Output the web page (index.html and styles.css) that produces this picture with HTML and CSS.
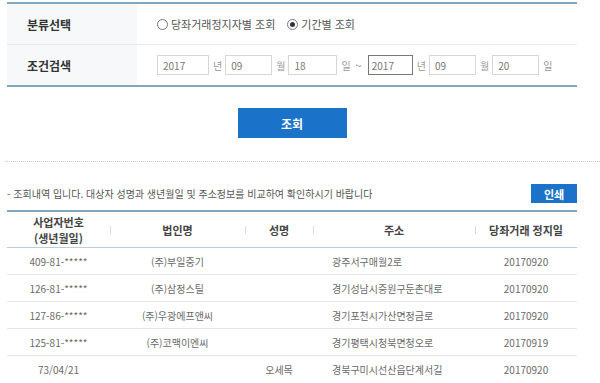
FILE: index.html
```html
<!DOCTYPE html>
<html lang="ko">

<head>
    <meta charset="UTF-8">
    <meta name="viewport" content="width=device-width, initial-scale=1.0">
    <title>당좌거래정지자 조회</title>
    <link rel="stylesheet" href="styles.css">
</head>

<body>
    <div class="page">
        <!-- Search form -->
        <div class="search">
            <div class="search-row">
                <div class="search-label">분류선택</div>
                <div class="search-field">
                    <label class="radio"><span class="radio-dot"></span>당좌거래정지자별 조회</label>
                    <label class="radio"><span class="radio-dot checked"></span>기간별 조회</label>
                </div>
            </div>
            <div class="search-row">
                <div class="search-label">조건검색</div>
                <div class="search-field">
                    <input type="text" class="date-input wide" value="2017">
                    <span class="unit">년</span>
                    <input type="text" class="date-input" value="09">
                    <span class="unit">월</span>
                    <input type="text" class="date-input mid" value="18">
                    <span class="unit">일</span>
                    <span class="tilde">~</span>
                    <input type="text" class="date-input focus" value="2017">
                    <span class="unit">년</span>
                    <input type="text" class="date-input" value="09">
                    <span class="unit">월</span>
                    <input type="text" class="date-input" value="20">
                    <span class="unit">일</span>
                </div>
            </div>
        </div>

        <div class="actions">
            <button class="btn-search">조회</button>
        </div>

        <div class="dotted"></div>

        <!-- Result -->
        <div class="result-head">
            <p class="notice">- 조회내역 입니다. 대상자 성명과 생년월일 및 주소정보를 비교하여 확인하시기 바랍니다</p>
            <button class="btn-print">인쇄</button>
        </div>

        <table class="result">
            <thead>
                <tr>
                    <th class="col-no">사업자번호<br>(생년월일)</th>
                    <th class="col-corp">법인명</th>
                    <th class="col-name">성명</th>
                    <th class="col-addr">주소</th>
                    <th class="col-date">당좌거래 정지일</th>
                </tr>
            </thead>
            <tbody>
                <tr>
                    <td>409-81-*****</td>
                    <td>(주)부일중기</td>
                    <td></td>
                    <td class="addr">광주서구매월2로</td>
                    <td>20170920</td>
                </tr>
                <tr>
                    <td>126-81-*****</td>
                    <td>(주)삼정스틸</td>
                    <td></td>
                    <td class="addr">경기성남시중원구둔촌대로</td>
                    <td>20170920</td>
                </tr>
                <tr>
                    <td>127-86-*****</td>
                    <td>(주)우광에프앤씨</td>
                    <td></td>
                    <td class="addr">경기포천시가산면정금로</td>
                    <td>20170920</td>
                </tr>
                <tr>
                    <td>125-81-*****</td>
                    <td>(주)코맥이엔씨</td>
                    <td></td>
                    <td class="addr">경기평택시청북면청오로</td>
                    <td>20170919</td>
                </tr>
                <tr>
                    <td>73/04/21</td>
                    <td></td>
                    <td>오세목</td>
                    <td class="addr">경북구미시선산읍단계서길</td>
                    <td>20170920</td>
                </tr>
            </tbody>
        </table>
    </div>
</body>

</html>
```

FILE: styles.css
```css
body {
    margin: 0;
    padding: 0;
    background: #ffffff;
    font-family: "Noto Sans CJK KR", "Noto Sans", sans-serif;
    font-size: 11px;
    color: #555;
}

.page {
    padding: 2px 0 0 7px;
}

/* search form */
.search {
    width: 570px;
    border-top: 2px solid #7fa8bd;
    border-bottom: 2px solid #7fa8bd;
}

.search-row {
    display: flex;
    height: 40px;
    border-bottom: 1px solid #e8e8e8;
}

.search-row:last-child {
    border-bottom: none;
}

.search-label {
    width: 110px;
    padding-left: 20px;
    background-color: #f6f8fa;
    display: flex;
    align-items: center;
    font-size: 12px;
    font-weight: bold;
    color: #333;
}

.search-field {
    display: flex;
    align-items: center;
    padding-left: 20px;
}

.radio {
    display: flex;
    align-items: center;
    margin-right: 12px;
    color: #555;
}

.radio-dot {
    width: 9px;
    height: 9px;
    border: 1px solid #777;
    border-radius: 50%;
    margin-right: 3px;
    position: relative;
}

.radio-dot.checked::after {
    content: "";
    position: absolute;
    left: 2px;
    top: 2px;
    width: 5px;
    height: 5px;
    border-radius: 50%;
    background: #333;
}

.date-input {
    box-sizing: border-box;
    width: 47px;
    height: 20px;
    padding: 0 5px;
    border: 1px solid #d6d6d6;
    font-family: inherit;
    font-size: 10px;
    color: #777;
    outline: none;
}

.date-input.wide {
    width: 52px;
}

.date-input.mid {
    width: 49px;
}

.date-input.focus {
    width: 45px;
    border-color: #777;
    padding: 0 3px;
}

.unit {
    margin: 0 3px 0 4px;
    color: #999;
    font-size: 10px;
}

.tilde {
    margin: 0 6px 0 2px;
    color: #777;
}

/* buttons */
.actions {
    width: 570px;
    display: flex;
    justify-content: center;
    margin-top: 21px;
}

.btn-search {
    width: 109px;
    height: 30px;
    border: none;
    background-color: #1a73c9;
    color: #fff;
    font-family: inherit;
    font-size: 12px;
    font-weight: bold;
}

.dotted {
    margin: 23px 0 0 -2px;
    border-top: 1px dotted #c8c8c8;
}

.result-head {
    width: 570px;
    display: flex;
    justify-content: space-between;
    align-items: center;
    margin-top: 22px;
}

.notice {
    margin: 0;
    font-size: 10px;
    color: #555;
}

.btn-print {
    width: 46px;
    height: 19px;
    border: none;
    background-color: #1a73c9;
    color: #fff;
    font-family: inherit;
    font-size: 11px;
    font-weight: bold;
    padding: 0;
}

/* result table */
.result {
    width: 570px;
    margin-top: 7px;
    border-collapse: collapse;
    border-top: 2px solid #7fa8bd;
}

.result th {
    height: 35px;
    padding: 0;
    font-size: 11px;
    line-height: 16px;
    font-weight: bold;
    color: #444;
    border-bottom: 1px solid #b9d0dc;
    position: relative;
}

.result th + th::before {
    content: "";
    position: absolute;
    left: 0;
    top: 14px;
    height: 8px;
    border-left: 1px solid #ddd;
}

.col-no {
    width: 103px;
}

.col-corp {
    width: 135px;
}

.col-name {
    width: 68px;
}

.col-addr {
    width: 162px;
}

.result td {
    height: 26px;
    padding: 0;
    text-align: center;
    font-size: 10px;
    color: #6a6a6a;
    border-bottom: 1px solid #e6e6e6;
}

.result tbody tr:last-child td {
    height: 27px;
    border-bottom: 1px solid #c9c9c9;
}

.result td.addr {
    text-align: left;
    padding-left: 19px;
}
```
